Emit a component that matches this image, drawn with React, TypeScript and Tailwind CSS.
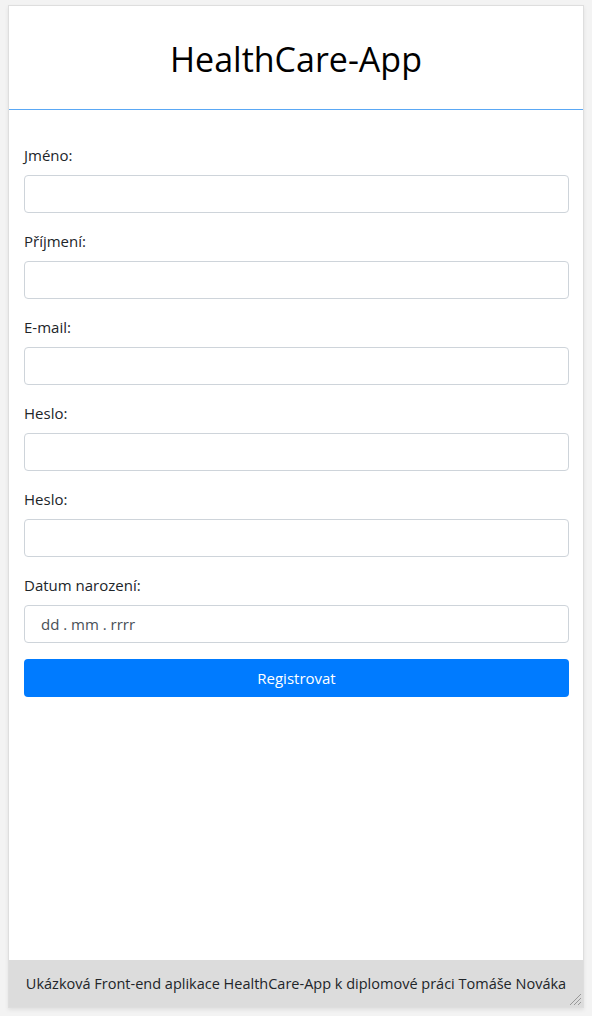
import React from "react"

const fields = [
  { label: "Jméno:", type: "text" },
  { label: "Příjmení:", type: "text" },
  { label: "E-mail:", type: "email" },
  { label: "Heslo:", type: "password" },
  { label: "Heslo:", type: "password" },
]

export default function App() {
  return (
    <div
      className="min-h-[1016px] bg-[#f3f3f3] px-2 pt-[5px] pb-2 text-[#212529]"
      style={{ fontFamily: '"Open Sans", "Noto Sans", sans-serif' }}
    >
      <div className="flex h-[1003px] flex-col border border-[#dedede] bg-white shadow-[0_2px_4px_rgba(0,0,0,0.08)]">
        {/* Header */}
        <header className="flex h-[103px] items-center justify-center pt-[2px]">
          <h1 className="text-[34px] leading-none font-normal text-black">HealthCare-App</h1>
        </header>
        <div className="h-px bg-[#5aa8f5]" />

        {/* Registration form */}
        <main className="flex-1 pr-[14px] pl-[15px] pt-[33px]">
          <form onSubmit={(e) => e.preventDefault()}>
            {fields.map((f, i) => (
              <div key={i} className="mb-4">
                <label className="mb-2 block text-[15px] leading-6">{f.label}</label>
                <input
                  type={f.type}
                  className="block h-[38px] w-full rounded-[4px] border border-[#ced4da] px-3 text-[15px] outline-none"
                />
              </div>
            ))}
            <div className="mb-4">
              <label className="mb-2 block text-[15px] leading-6">Datum narození:</label>
              <input
                type="text"
                placeholder="dd . mm . rrrr"
                className="block h-[38px] w-full rounded-[4px] border border-[#ced4da] pl-4 text-[15px] outline-none placeholder:text-[#495057]"
              />
            </div>
            <button
              type="submit"
              className="block h-[38px] w-full rounded-[4px] bg-[#007bff] text-[15px] text-white"
            >
              Registrovat
            </button>
          </form>
        </main>

        {/* Footer */}
        <footer className="relative flex h-[47px] items-center justify-center bg-[#dcdcdc] text-[14.5px]">
          <span>Ukázková Front-end aplikace HealthCare-App k diplomové práci Tomáše Nováka</span>
          <svg className="absolute right-[1px] bottom-[1px]" width="13" height="13" viewBox="0 0 13 13">
            <path d="M12 1 L1 12 M12 5 L5 12 M12 9 L9 12" stroke="#999" strokeWidth="1" />
          </svg>
        </footer>
      </div>
    </div>
  )
}
